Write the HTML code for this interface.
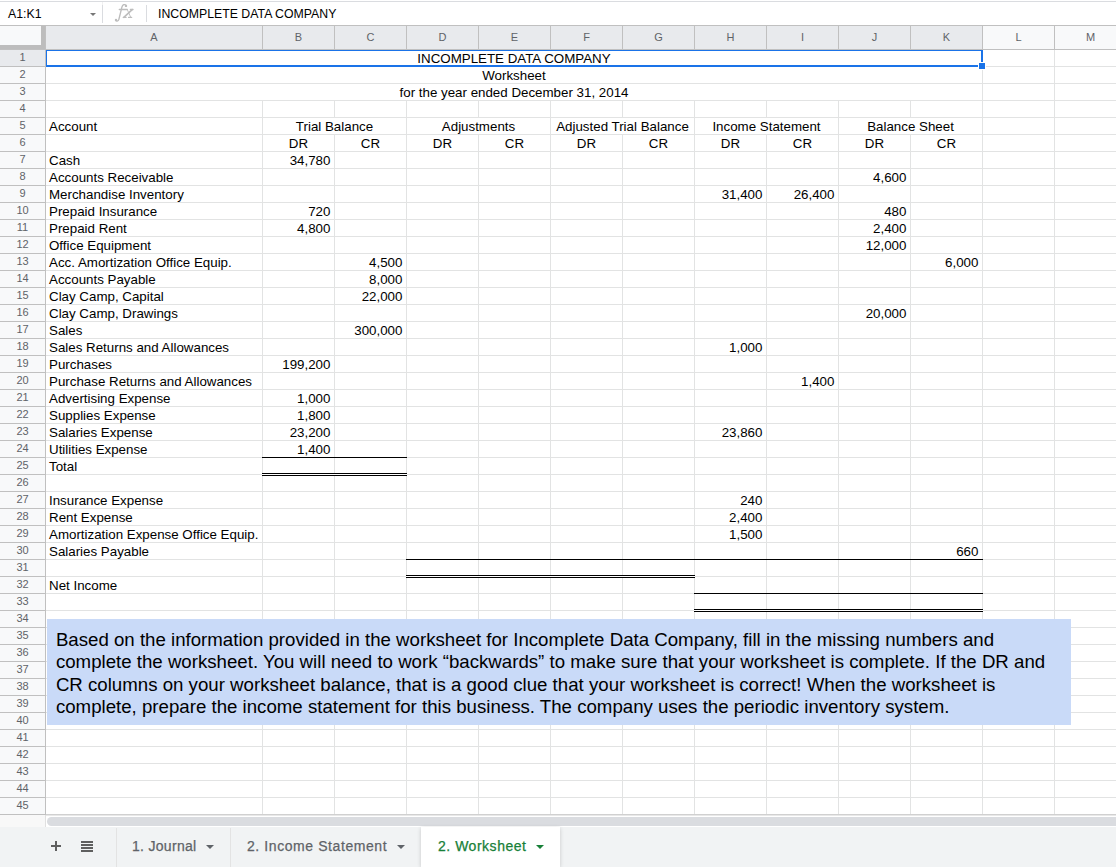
<!DOCTYPE html>
<html><head><meta charset="utf-8"><style>
html,body{margin:0;padding:0;}
body{width:1116px;height:867px;overflow:hidden;position:relative;background:#fff;font-family:"Liberation Sans",sans-serif;}
.c{position:absolute;font-size:13.33px;line-height:16px;height:16px;color:#000;white-space:nowrap;}
.r{text-align:right;}
.m{text-align:center;}
.h{position:absolute;font-size:11px;line-height:23px;height:23px;text-align:center;color:#5f6368;}
.rn{position:absolute;left:0;width:45px;font-size:11px;line-height:16px;height:16px;text-align:center;color:#5f6368;}
.tab{position:absolute;top:826px;height:40px;font-size:14px;line-height:40px;color:#5f6368;white-space:nowrap;-webkit-text-stroke:0.25px currentColor;}
</style></head><body>
<div style="position:absolute;left:262px;top:101px;width:1px;height:714px;background:#e2e3e3"></div><div style="position:absolute;left:334px;top:101px;width:1px;height:17px;background:#e2e3e3"></div><div style="position:absolute;left:334px;top:135px;width:1px;height:680px;background:#e2e3e3"></div><div style="position:absolute;left:406px;top:101px;width:1px;height:714px;background:#e2e3e3"></div><div style="position:absolute;left:478px;top:101px;width:1px;height:17px;background:#e2e3e3"></div><div style="position:absolute;left:478px;top:135px;width:1px;height:680px;background:#e2e3e3"></div><div style="position:absolute;left:550px;top:101px;width:1px;height:714px;background:#e2e3e3"></div><div style="position:absolute;left:622px;top:101px;width:1px;height:17px;background:#e2e3e3"></div><div style="position:absolute;left:622px;top:135px;width:1px;height:680px;background:#e2e3e3"></div><div style="position:absolute;left:694px;top:101px;width:1px;height:714px;background:#e2e3e3"></div><div style="position:absolute;left:766px;top:101px;width:1px;height:17px;background:#e2e3e3"></div><div style="position:absolute;left:766px;top:135px;width:1px;height:680px;background:#e2e3e3"></div><div style="position:absolute;left:838px;top:101px;width:1px;height:714px;background:#e2e3e3"></div><div style="position:absolute;left:910px;top:101px;width:1px;height:17px;background:#e2e3e3"></div><div style="position:absolute;left:910px;top:135px;width:1px;height:680px;background:#e2e3e3"></div><div style="position:absolute;left:982px;top:50px;width:1px;height:765px;background:#e2e3e3"></div><div style="position:absolute;left:1054px;top:50px;width:1px;height:765px;background:#e2e3e3"></div><div style="position:absolute;left:46px;top:66px;width:1070px;height:1px;background:#e2e3e3"></div><div style="position:absolute;left:46px;top:83px;width:1070px;height:1px;background:#e2e3e3"></div><div style="position:absolute;left:46px;top:100px;width:1070px;height:1px;background:#e2e3e3"></div><div style="position:absolute;left:46px;top:117px;width:1070px;height:1px;background:#e2e3e3"></div><div style="position:absolute;left:46px;top:134px;width:1070px;height:1px;background:#e2e3e3"></div><div style="position:absolute;left:46px;top:151px;width:1070px;height:1px;background:#e2e3e3"></div><div style="position:absolute;left:46px;top:168px;width:1070px;height:1px;background:#e2e3e3"></div><div style="position:absolute;left:46px;top:185px;width:1070px;height:1px;background:#e2e3e3"></div><div style="position:absolute;left:46px;top:202px;width:1070px;height:1px;background:#e2e3e3"></div><div style="position:absolute;left:46px;top:219px;width:1070px;height:1px;background:#e2e3e3"></div><div style="position:absolute;left:46px;top:236px;width:1070px;height:1px;background:#e2e3e3"></div><div style="position:absolute;left:46px;top:253px;width:1070px;height:1px;background:#e2e3e3"></div><div style="position:absolute;left:46px;top:270px;width:1070px;height:1px;background:#e2e3e3"></div><div style="position:absolute;left:46px;top:287px;width:1070px;height:1px;background:#e2e3e3"></div><div style="position:absolute;left:46px;top:304px;width:1070px;height:1px;background:#e2e3e3"></div><div style="position:absolute;left:46px;top:321px;width:1070px;height:1px;background:#e2e3e3"></div><div style="position:absolute;left:46px;top:338px;width:1070px;height:1px;background:#e2e3e3"></div><div style="position:absolute;left:46px;top:355px;width:1070px;height:1px;background:#e2e3e3"></div><div style="position:absolute;left:46px;top:372px;width:1070px;height:1px;background:#e2e3e3"></div><div style="position:absolute;left:46px;top:389px;width:1070px;height:1px;background:#e2e3e3"></div><div style="position:absolute;left:46px;top:406px;width:1070px;height:1px;background:#e2e3e3"></div><div style="position:absolute;left:46px;top:423px;width:1070px;height:1px;background:#e2e3e3"></div><div style="position:absolute;left:46px;top:440px;width:1070px;height:1px;background:#e2e3e3"></div><div style="position:absolute;left:46px;top:457px;width:1070px;height:1px;background:#e2e3e3"></div><div style="position:absolute;left:46px;top:474px;width:1070px;height:1px;background:#e2e3e3"></div><div style="position:absolute;left:46px;top:491px;width:1070px;height:1px;background:#e2e3e3"></div><div style="position:absolute;left:46px;top:508px;width:1070px;height:1px;background:#e2e3e3"></div><div style="position:absolute;left:46px;top:525px;width:1070px;height:1px;background:#e2e3e3"></div><div style="position:absolute;left:46px;top:542px;width:1070px;height:1px;background:#e2e3e3"></div><div style="position:absolute;left:46px;top:559px;width:1070px;height:1px;background:#e2e3e3"></div><div style="position:absolute;left:46px;top:576px;width:1070px;height:1px;background:#e2e3e3"></div><div style="position:absolute;left:46px;top:593px;width:1070px;height:1px;background:#e2e3e3"></div><div style="position:absolute;left:46px;top:610px;width:1070px;height:1px;background:#e2e3e3"></div><div style="position:absolute;left:46px;top:627px;width:1070px;height:1px;background:#e2e3e3"></div><div style="position:absolute;left:46px;top:644px;width:1070px;height:1px;background:#e2e3e3"></div><div style="position:absolute;left:46px;top:661px;width:1070px;height:1px;background:#e2e3e3"></div><div style="position:absolute;left:46px;top:678px;width:1070px;height:1px;background:#e2e3e3"></div><div style="position:absolute;left:46px;top:695px;width:1070px;height:1px;background:#e2e3e3"></div><div style="position:absolute;left:46px;top:712px;width:1070px;height:1px;background:#e2e3e3"></div><div style="position:absolute;left:46px;top:729px;width:1070px;height:1px;background:#e2e3e3"></div><div style="position:absolute;left:46px;top:746px;width:1070px;height:1px;background:#e2e3e3"></div><div style="position:absolute;left:46px;top:763px;width:1070px;height:1px;background:#e2e3e3"></div><div style="position:absolute;left:46px;top:780px;width:1070px;height:1px;background:#e2e3e3"></div><div style="position:absolute;left:46px;top:797px;width:1070px;height:1px;background:#e2e3e3"></div><div style="position:absolute;left:262px;top:457px;width:145px;height:1px;background:#000"></div><div style="position:absolute;left:262px;top:473px;width:145px;height:1px;background:#000"></div><div style="position:absolute;left:262px;top:475px;width:145px;height:1px;background:#000"></div><div style="position:absolute;left:262px;top:474px;width:145px;height:1px;background:#fff"></div><div style="position:absolute;left:406px;top:559px;width:577px;height:1px;background:#000"></div><div style="position:absolute;left:406px;top:575px;width:289px;height:1px;background:#000"></div><div style="position:absolute;left:406px;top:577px;width:289px;height:1px;background:#000"></div><div style="position:absolute;left:406px;top:576px;width:289px;height:1px;background:#fff"></div><div style="position:absolute;left:694px;top:593px;width:289px;height:1px;background:#000"></div><div style="position:absolute;left:694px;top:609px;width:289px;height:1px;background:#000"></div><div style="position:absolute;left:694px;top:611px;width:289px;height:1px;background:#000"></div><div style="position:absolute;left:694px;top:610px;width:289px;height:1px;background:#fff"></div><div style="position:absolute;left:0px;top:0px;width:1116px;height:26px;background:#fff"></div><div style="position:absolute;left:0px;top:1px;width:1116px;height:1px;background:#dadce0"></div><div style="position:absolute;left:0px;top:25px;width:1116px;height:1px;background:#c0c0c0"></div><div style="position:absolute;left:102px;top:2px;width:1px;height:3px;background:#f1f1f1"></div><div style="position:absolute;left:102px;top:5px;width:1px;height:18px;background:#dadce0"></div><div style="position:absolute;left:146px;top:5px;width:1px;height:17px;background:#dadce0"></div><div style="position:absolute;left:46px;top:26px;width:936px;height:23px;background:#e8eaed"></div><div style="position:absolute;left:983px;top:26px;width:133px;height:23px;background:#f8f9fa"></div><div style="position:absolute;left:0px;top:49px;width:1116px;height:1px;background:#c0c0c0"></div><div style="position:absolute;left:262px;top:26px;width:1px;height:23px;background:#c0c0c0"></div><div style="position:absolute;left:334px;top:26px;width:1px;height:23px;background:#c0c0c0"></div><div style="position:absolute;left:406px;top:26px;width:1px;height:23px;background:#c0c0c0"></div><div style="position:absolute;left:478px;top:26px;width:1px;height:23px;background:#c0c0c0"></div><div style="position:absolute;left:550px;top:26px;width:1px;height:23px;background:#c0c0c0"></div><div style="position:absolute;left:622px;top:26px;width:1px;height:23px;background:#c0c0c0"></div><div style="position:absolute;left:694px;top:26px;width:1px;height:23px;background:#c0c0c0"></div><div style="position:absolute;left:766px;top:26px;width:1px;height:23px;background:#c0c0c0"></div><div style="position:absolute;left:838px;top:26px;width:1px;height:23px;background:#c0c0c0"></div><div style="position:absolute;left:910px;top:26px;width:1px;height:23px;background:#c0c0c0"></div><div style="position:absolute;left:982px;top:26px;width:1px;height:23px;background:#c0c0c0"></div><div style="position:absolute;left:1054px;top:26px;width:1px;height:23px;background:#c0c0c0"></div><div style="position:absolute;left:0px;top:50px;width:45px;height:764px;background:#f8f9fa"></div><div style="position:absolute;left:0px;top:50px;width:45px;height:16px;background:#e8eaed"></div><div style="position:absolute;left:45px;top:26px;width:1px;height:801px;background:#c0c0c0"></div><div style="position:absolute;left:0px;top:66px;width:45px;height:1px;background:#c0c0c0"></div><div style="position:absolute;left:0px;top:83px;width:45px;height:1px;background:#c0c0c0"></div><div style="position:absolute;left:0px;top:100px;width:45px;height:1px;background:#c0c0c0"></div><div style="position:absolute;left:0px;top:117px;width:45px;height:1px;background:#c0c0c0"></div><div style="position:absolute;left:0px;top:134px;width:45px;height:1px;background:#c0c0c0"></div><div style="position:absolute;left:0px;top:151px;width:45px;height:1px;background:#c0c0c0"></div><div style="position:absolute;left:0px;top:168px;width:45px;height:1px;background:#c0c0c0"></div><div style="position:absolute;left:0px;top:185px;width:45px;height:1px;background:#c0c0c0"></div><div style="position:absolute;left:0px;top:202px;width:45px;height:1px;background:#c0c0c0"></div><div style="position:absolute;left:0px;top:219px;width:45px;height:1px;background:#c0c0c0"></div><div style="position:absolute;left:0px;top:236px;width:45px;height:1px;background:#c0c0c0"></div><div style="position:absolute;left:0px;top:253px;width:45px;height:1px;background:#c0c0c0"></div><div style="position:absolute;left:0px;top:270px;width:45px;height:1px;background:#c0c0c0"></div><div style="position:absolute;left:0px;top:287px;width:45px;height:1px;background:#c0c0c0"></div><div style="position:absolute;left:0px;top:304px;width:45px;height:1px;background:#c0c0c0"></div><div style="position:absolute;left:0px;top:321px;width:45px;height:1px;background:#c0c0c0"></div><div style="position:absolute;left:0px;top:338px;width:45px;height:1px;background:#c0c0c0"></div><div style="position:absolute;left:0px;top:355px;width:45px;height:1px;background:#c0c0c0"></div><div style="position:absolute;left:0px;top:372px;width:45px;height:1px;background:#c0c0c0"></div><div style="position:absolute;left:0px;top:389px;width:45px;height:1px;background:#c0c0c0"></div><div style="position:absolute;left:0px;top:406px;width:45px;height:1px;background:#c0c0c0"></div><div style="position:absolute;left:0px;top:423px;width:45px;height:1px;background:#c0c0c0"></div><div style="position:absolute;left:0px;top:440px;width:45px;height:1px;background:#c0c0c0"></div><div style="position:absolute;left:0px;top:457px;width:45px;height:1px;background:#c0c0c0"></div><div style="position:absolute;left:0px;top:474px;width:45px;height:1px;background:#c0c0c0"></div><div style="position:absolute;left:0px;top:491px;width:45px;height:1px;background:#c0c0c0"></div><div style="position:absolute;left:0px;top:508px;width:45px;height:1px;background:#c0c0c0"></div><div style="position:absolute;left:0px;top:525px;width:45px;height:1px;background:#c0c0c0"></div><div style="position:absolute;left:0px;top:542px;width:45px;height:1px;background:#c0c0c0"></div><div style="position:absolute;left:0px;top:559px;width:45px;height:1px;background:#c0c0c0"></div><div style="position:absolute;left:0px;top:576px;width:45px;height:1px;background:#c0c0c0"></div><div style="position:absolute;left:0px;top:593px;width:45px;height:1px;background:#c0c0c0"></div><div style="position:absolute;left:0px;top:610px;width:45px;height:1px;background:#c0c0c0"></div><div style="position:absolute;left:0px;top:627px;width:45px;height:1px;background:#c0c0c0"></div><div style="position:absolute;left:0px;top:644px;width:45px;height:1px;background:#c0c0c0"></div><div style="position:absolute;left:0px;top:661px;width:45px;height:1px;background:#c0c0c0"></div><div style="position:absolute;left:0px;top:678px;width:45px;height:1px;background:#c0c0c0"></div><div style="position:absolute;left:0px;top:695px;width:45px;height:1px;background:#c0c0c0"></div><div style="position:absolute;left:0px;top:712px;width:45px;height:1px;background:#c0c0c0"></div><div style="position:absolute;left:0px;top:729px;width:45px;height:1px;background:#c0c0c0"></div><div style="position:absolute;left:0px;top:746px;width:45px;height:1px;background:#c0c0c0"></div><div style="position:absolute;left:0px;top:763px;width:45px;height:1px;background:#c0c0c0"></div><div style="position:absolute;left:0px;top:780px;width:45px;height:1px;background:#c0c0c0"></div><div style="position:absolute;left:0px;top:797px;width:45px;height:1px;background:#c0c0c0"></div><div style="position:absolute;left:0px;top:814px;width:45px;height:1px;background:#c0c0c0"></div><div style="position:absolute;left:46px;top:814px;width:1070px;height:1px;background:#d0d0d0"></div><div style="position:absolute;left:0px;top:26px;width:45px;height:23px;background:#f8f9fa"></div><div style="position:absolute;left:41px;top:26px;width:4px;height:23px;background:#bdbdbd"></div><div style="position:absolute;left:0px;top:45px;width:45px;height:4px;background:#bdbdbd"></div><div style="position:absolute;left:46px;top:50px;width:937px;height:1px;background:#1a73e8"></div><div style="position:absolute;left:46px;top:50px;width:1px;height:17px;background:#1a73e8"></div><div style="position:absolute;left:46px;top:65px;width:932px;height:2px;background:#1a73e8"></div><div style="position:absolute;left:981px;top:50px;width:2px;height:12px;background:#1a73e8"></div><div style="position:absolute;left:978px;top:62px;width:8px;height:8px;background:#fff"></div><div style="position:absolute;left:979px;top:63px;width:6px;height:6px;background:#1a73e8"></div><div style="position:absolute;left:0px;top:815px;width:45px;height:12px;background:#f8f8f8"></div><div style="position:absolute;left:46px;top:815px;width:1070px;height:1px;background:#e8e8e8"></div><div style="position:absolute;left:45px;top:815px;width:1px;height:12px;background:#e0e0e0"></div>
<div class="c m" style="left:46px;width:936px;top:51px">INCOMPLETE DATA COMPANY</div><div class="c m" style="left:46px;width:936px;top:68px">Worksheet</div><div class="c m" style="left:46px;width:936px;top:85px">for the year ended December 31, 2014</div><div class="c" style="left:49px;top:119px">Account</div><div class="c m" style="left:263px;width:143px;top:119px">Trial Balance</div><div class="c m" style="left:407px;width:143px;top:119px">Adjustments</div><div class="c m" style="left:551px;width:143px;top:119px">Adjusted Trial Balance</div><div class="c m" style="left:695px;width:143px;top:119px">Income Statement</div><div class="c m" style="left:839px;width:143px;top:119px">Balance Sheet</div><div class="c m" style="left:263px;width:71px;top:136px">DR</div><div class="c m" style="left:335px;width:71px;top:136px">CR</div><div class="c m" style="left:407px;width:71px;top:136px">DR</div><div class="c m" style="left:479px;width:71px;top:136px">CR</div><div class="c m" style="left:551px;width:71px;top:136px">DR</div><div class="c m" style="left:623px;width:71px;top:136px">CR</div><div class="c m" style="left:695px;width:71px;top:136px">DR</div><div class="c m" style="left:767px;width:71px;top:136px">CR</div><div class="c m" style="left:839px;width:71px;top:136px">DR</div><div class="c m" style="left:911px;width:71px;top:136px">CR</div><div class="c" style="left:49px;top:153px">Cash</div><div class="c" style="left:49px;top:170px">Accounts Receivable</div><div class="c" style="left:49px;top:187px">Merchandise Inventory</div><div class="c" style="left:49px;top:204px">Prepaid Insurance</div><div class="c" style="left:49px;top:221px">Prepaid Rent</div><div class="c" style="left:49px;top:238px">Office Equipment</div><div class="c" style="left:49px;top:255px">Acc. Amortization Office Equip.</div><div class="c" style="left:49px;top:272px">Accounts Payable</div><div class="c" style="left:49px;top:289px">Clay Camp, Capital</div><div class="c" style="left:49px;top:306px">Clay Camp, Drawings</div><div class="c" style="left:49px;top:323px">Sales</div><div class="c" style="left:49px;top:340px">Sales Returns and Allowances</div><div class="c" style="left:49px;top:357px">Purchases</div><div class="c" style="left:49px;top:374px">Purchase Returns and Allowances</div><div class="c" style="left:49px;top:391px">Advertising Expense</div><div class="c" style="left:49px;top:408px">Supplies Expense</div><div class="c" style="left:49px;top:425px">Salaries Expense</div><div class="c" style="left:49px;top:442px">Utilities Expense</div><div class="c" style="left:49px;top:459px">Total</div><div class="c" style="left:49px;top:493px">Insurance Expense</div><div class="c" style="left:49px;top:510px">Rent Expense</div><div class="c" style="left:49px;top:527px">Amortization Expense Office Equip.</div><div class="c" style="left:49px;top:544px">Salaries Payable</div><div class="c" style="left:49px;top:578px">Net Income</div><div class="c r" style="right:785.6px;top:153px">34,780</div><div class="c r" style="right:209.60000000000002px;top:170px">4,600</div><div class="c r" style="right:353.6px;top:187px">31,400</div><div class="c r" style="right:281.6px;top:187px">26,400</div><div class="c r" style="right:785.6px;top:204px">720</div><div class="c r" style="right:209.60000000000002px;top:204px">480</div><div class="c r" style="right:785.6px;top:221px">4,800</div><div class="c r" style="right:209.60000000000002px;top:221px">2,400</div><div class="c r" style="right:209.60000000000002px;top:238px">12,000</div><div class="c r" style="right:713.6px;top:255px">4,500</div><div class="c r" style="right:137.60000000000002px;top:255px">6,000</div><div class="c r" style="right:713.6px;top:272px">8,000</div><div class="c r" style="right:713.6px;top:289px">22,000</div><div class="c r" style="right:209.60000000000002px;top:306px">20,000</div><div class="c r" style="right:713.6px;top:323px">300,000</div><div class="c r" style="right:353.6px;top:340px">1,000</div><div class="c r" style="right:785.6px;top:357px">199,200</div><div class="c r" style="right:281.6px;top:374px">1,400</div><div class="c r" style="right:785.6px;top:391px">1,000</div><div class="c r" style="right:785.6px;top:408px">1,800</div><div class="c r" style="right:785.6px;top:425px">23,200</div><div class="c r" style="right:353.6px;top:425px">23,860</div><div class="c r" style="right:785.6px;top:442px">1,400</div><div class="c r" style="right:353.6px;top:493px">240</div><div class="c r" style="right:353.6px;top:510px">2,400</div><div class="c r" style="right:353.6px;top:527px">1,500</div><div class="c r" style="right:137.60000000000002px;top:544px">660</div>
<div class="h" style="left:46px;width:216px;top:26px">A</div><div class="h" style="left:263px;width:71px;top:26px">B</div><div class="h" style="left:335px;width:71px;top:26px">C</div><div class="h" style="left:407px;width:71px;top:26px">D</div><div class="h" style="left:479px;width:71px;top:26px">E</div><div class="h" style="left:551px;width:71px;top:26px">F</div><div class="h" style="left:623px;width:71px;top:26px">G</div><div class="h" style="left:695px;width:71px;top:26px">H</div><div class="h" style="left:767px;width:71px;top:26px">I</div><div class="h" style="left:839px;width:71px;top:26px">J</div><div class="h" style="left:911px;width:71px;top:26px">K</div><div class="h" style="left:983px;width:71px;top:26px">L</div><div class="h" style="left:1055px;width:71px;top:26px">M</div><div class="rn" style="top:49px">1</div><div class="rn" style="top:66px">2</div><div class="rn" style="top:83px">3</div><div class="rn" style="top:100px">4</div><div class="rn" style="top:117px">5</div><div class="rn" style="top:134px">6</div><div class="rn" style="top:151px">7</div><div class="rn" style="top:168px">8</div><div class="rn" style="top:185px">9</div><div class="rn" style="top:202px">10</div><div class="rn" style="top:219px">11</div><div class="rn" style="top:236px">12</div><div class="rn" style="top:253px">13</div><div class="rn" style="top:270px">14</div><div class="rn" style="top:287px">15</div><div class="rn" style="top:304px">16</div><div class="rn" style="top:321px">17</div><div class="rn" style="top:338px">18</div><div class="rn" style="top:355px">19</div><div class="rn" style="top:372px">20</div><div class="rn" style="top:389px">21</div><div class="rn" style="top:406px">22</div><div class="rn" style="top:423px">23</div><div class="rn" style="top:440px">24</div><div class="rn" style="top:457px">25</div><div class="rn" style="top:474px">26</div><div class="rn" style="top:491px">27</div><div class="rn" style="top:508px">28</div><div class="rn" style="top:525px">29</div><div class="rn" style="top:542px">30</div><div class="rn" style="top:559px">31</div><div class="rn" style="top:576px">32</div><div class="rn" style="top:593px">33</div><div class="rn" style="top:610px">34</div><div class="rn" style="top:627px">35</div><div class="rn" style="top:644px">36</div><div class="rn" style="top:661px">37</div><div class="rn" style="top:678px">38</div><div class="rn" style="top:695px">39</div><div class="rn" style="top:712px">40</div><div class="rn" style="top:729px">41</div><div class="rn" style="top:746px">42</div><div class="rn" style="top:763px">43</div><div class="rn" style="top:780px">44</div><div class="rn" style="top:797px">45</div>
<div style="position:absolute;left:8px;top:1px;height:26px;line-height:26px;font-size:12.3px;color:#000">A1:K1</div>
<div style="position:absolute;left:89.5px;top:13px;width:0;height:0;border-left:3px solid transparent;border-right:3px solid transparent;border-top:3px solid #777"></div>
<svg style="position:absolute;left:0;top:0" width="160" height="26" viewBox="0 0 160 26"><g fill="none" stroke="#bdbdbd" stroke-width="1.35" stroke-linecap="round"><path d="M115.6,20.2 C116.2,21.6 118.2,21.4 118.9,19.2 L121.9,7.2 C122.6,4.6 124.6,3.8 126.3,5.4"/><path d="M119.3,9.5 L127.3,9.5"/><path d="M123.8,17.3 L132.2,9.7" stroke-width="1.6"/><path d="M127.4,9.9 L130.8,17.4" stroke-width="0.9"/><path d="M123.3,17.4 L126,17.4 M128.6,17.4 L131.6,17.4 M130.4,9.5 L133,9.5"/></g><circle cx="126" cy="5.9" r="1.2" fill="#bdbdbd"/><circle cx="116" cy="19.9" r="1.2" fill="#bdbdbd"/></svg>
<div style="position:absolute;left:158px;top:1px;height:26px;line-height:26px;font-size:12.3px;color:#000">INCOMPLETE DATA COMPANY</div>
<!-- blue box -->
<div style="position:absolute;left:47px;top:619px;width:1024px;height:106px;background:#c9daf8"></div>
<div style="position:absolute;left:55.9px;top:629px;font-size:18.67px;line-height:22.4px;color:#000;white-space:nowrap">Based on the information provided in the worksheet for Incomplete Data Company, fill in the missing numbers and<br>complete the worksheet. You will need to work “backwards” to make sure that your worksheet is complete. If the DR and<br>CR columns on your worksheet balance, that is a good clue that your worksheet is correct! When the worksheet is<br>complete, prepare the income statement for this business. The company uses the periodic inventory system.</div>
<!-- scrollbar thumb -->
<div style="position:absolute;left:47px;top:817px;width:1079px;height:9px;border-radius:5px;background:#dadce0"></div>
<!-- tab bar -->
<div style="position:absolute;left:0;top:827px;width:1116px;height:40px;background:#f1f3f4"></div>
<div style="position:absolute;left:116px;top:828px;width:1px;height:39px;background:#e3e3e3"></div>
<div style="position:absolute;left:230px;top:828px;width:1px;height:39px;background:#e3e3e3"></div>
<div style="position:absolute;left:421px;top:827px;width:139px;height:40px;background:#fff;box-shadow:0 1px 4px rgba(0,0,0,0.18)"></div>
<div style="position:absolute;left:51px;top:845px;width:10px;height:2px;background:#5f5f5f"></div>
<div style="position:absolute;left:55px;top:841px;width:2px;height:10px;background:#5f5f5f"></div>
<div style="position:absolute;left:81px;top:841px;width:12px;height:2px;background:#5f5f5f"></div>
<div style="position:absolute;left:81px;top:844px;width:12px;height:2px;background:#5f5f5f"></div>
<div style="position:absolute;left:81px;top:847px;width:12px;height:2px;background:#5f5f5f"></div>
<div style="position:absolute;left:81px;top:850px;width:12px;height:2px;background:#5f5f5f"></div>
<div class="tab" style="left:132px;letter-spacing:0.3px">1. Journal</div>
<div style="position:absolute;left:206px;top:845px;width:0;height:0;border-left:4px solid transparent;border-right:4px solid transparent;border-top:4px solid #5f6368"></div>
<div class="tab" style="left:247px;letter-spacing:0.58px">2. Income Statement</div>
<div style="position:absolute;left:397px;top:845px;width:0;height:0;border-left:4px solid transparent;border-right:4px solid transparent;border-top:4px solid #5f6368"></div>
<div class="tab" style="left:438px;letter-spacing:0.52px;color:#188038">2. Worksheet</div>
<div style="position:absolute;left:536px;top:845px;width:0;height:0;border-left:4px solid transparent;border-right:4px solid transparent;border-top:4px solid #188038"></div>
</body></html>
